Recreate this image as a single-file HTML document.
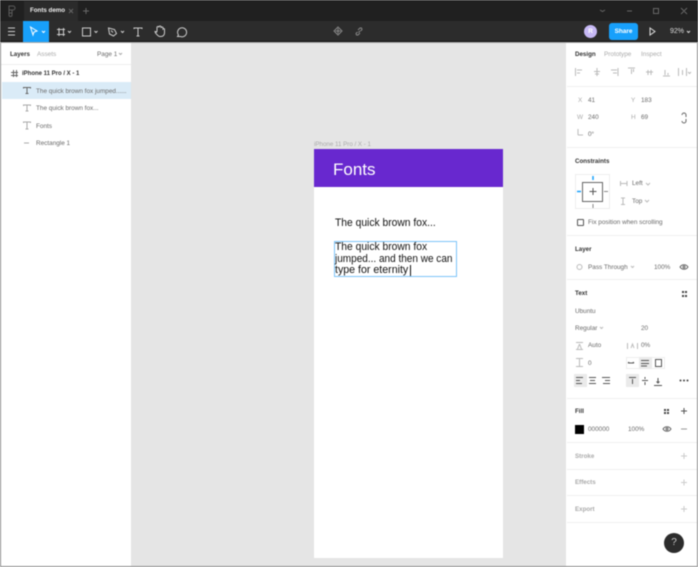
<!DOCTYPE html>
<html><head><meta charset="utf-8"><style>
html,body{margin:0;padding:0;width:698px;height:567px;overflow:hidden;background:#fff}
body{position:relative;font-family:"Liberation Sans",sans-serif;filter:blur(.4px)}
.b{position:absolute}
.t{position:absolute;font-size:6.4px;line-height:8px;white-space:nowrap;color:#6a6a6a}
.h{color:#333;font-weight:bold;font-size:6.2px}
.g{color:#aaa}
svg{position:absolute;left:0;top:0}
.u{position:absolute;font-family:"Liberation Sans",sans-serif;color:#111;white-space:nowrap;transform-origin:0 0}
</style></head><body>
<div class="b" style="left:0;top:0;width:698px;height:21px;background:#202020"></div>
<div class="b" style="left:24px;top:1px;width:54px;height:20px;background:#2b2b2b"></div>
<div class="b" style="left:0;top:21px;width:698px;height:20px;background:#2c2c2c"></div>
<div class="b" style="left:0;top:41px;width:698px;height:1px;background:#111"></div>
<div class="b" style="left:23px;top:21px;width:26px;height:21px;background:#18a0fb"></div>
<div class="b" style="left:1px;top:43px;width:130px;height:524px;background:#fff"></div>
<div class="b" style="left:0;top:42px;width:698px;height:1px;background:#aaa"></div>
<div class="b" style="left:131px;top:43px;width:435px;height:524px;background:#e5e5e5"></div>
<div class="b" style="left:566px;top:43px;width:131px;height:524px;background:#fff"></div>
<div class="b" style="left:0;top:43px;width:1px;height:524px;background:#888"></div>
<div class="b" style="left:697px;top:43px;width:1px;height:524px;background:#888"></div>
<div class="b" style="left:0;top:566px;width:698px;height:1px;background:#888"></div>
<div class="b" style="left:1px;top:64px;width:130px;height:1px;background:#eee"></div>
<div class="b" style="left:2px;top:82px;width:129px;height:17px;background:#daebf7"></div>

<div class="t" style="left:30px;top:7px;color:#eee;font-weight:bold;font-size:6.2px">Fonts demo</div>
<div class="t h" style="left:10px;top:51px">Layers</div>
<div class="t g" style="left:37px;top:51px">Assets</div>
<div class="t" style="left:97px;top:51px">Page 1</div>
<div class="t h" style="left:22px;top:70px;font-size:6px">iPhone 11 Pro / X - 1</div>
<div class="t" style="left:36px;top:88px;font-size:6.4px">The quick brown fox jumped......</div>
<div class="t" style="left:36px;top:105px">The quick brown fox...</div>
<div class="t" style="left:36px;top:123px">Fonts</div>
<div class="t" style="left:36px;top:140px">Rectangle 1</div>

<div class="b" style="left:609px;top:23px;width:29px;height:17px;background:#18a0fb;border-radius:3px"></div>
<div class="t" style="left:609px;top:28px;width:29px;text-align:center;color:#fff;font-weight:bold">Share</div>
<div class="b" style="left:584px;top:25px;width:13px;height:13px;border-radius:50%;background:#c7b9f5"></div>
<div class="t" style="left:584px;top:28px;width:13px;text-align:center;color:#fff;font-weight:bold">R</div>
<div class="t" style="left:670px;top:28px;color:#ddd;font-size:7px">92%</div>

<div class="t g" style="left:314px;top:141px;font-size:6.2px">iPhone 11 Pro / X - 1</div>
<div class="b" style="left:314px;top:149px;width:189px;height:409px;background:#fff"></div>
<div class="b" style="left:314px;top:149px;width:189px;height:38px;background:#6828cf"></div>
<div class="u" style="left:333px;top:160px;font-size:17px;line-height:20px;color:#fff">Fonts</div>
<div class="u" style="left:335px;top:217px;font-size:11.2px;line-height:13px;transform:scaleX(.92)">The quick brown fox...</div>
<div class="b" style="left:334px;top:241px;width:121px;height:34px;border:1px solid #7cc4f8"></div>
<div class="u" style="left:335px;top:241px;font-size:11.2px;line-height:13px;transform:scaleX(.92)">The quick brown fox</div>
<div class="u" style="left:335px;top:253px;font-size:11.2px;line-height:13px;transform:scaleX(.895)">jumped... and then we can</div>
<div class="u" style="left:335px;top:264px;font-size:11.2px;line-height:13px;transform:scaleX(.95)">type for eternity</div>
<div class="b" style="left:410px;top:265px;width:1px;height:11px;background:#111"></div>

<div class="t h" style="left:575px;top:51px">Design</div>
<div class="t g" style="left:604px;top:51px">Prototype</div>
<div class="t g" style="left:641px;top:51px">Inspect</div>
<div class="t g" style="left:578px;top:97px">X</div><div class="t" style="left:588px;top:97px">41</div>
<div class="t g" style="left:631px;top:97px">Y</div><div class="t" style="left:641px;top:97px">183</div>
<div class="t g" style="left:577px;top:114px">W</div><div class="t" style="left:588px;top:114px">240</div>
<div class="t g" style="left:631px;top:114px">H</div><div class="t" style="left:641px;top:114px">69</div>
<div class="t" style="left:588px;top:131px">0°</div>
<div class="t h" style="left:575px;top:158px">Constraints</div>
<div class="t" style="left:632px;top:180px">Left</div>
<div class="t" style="left:632px;top:198px">Top</div>
<div class="t" style="left:588px;top:219px">Fix position when scrolling</div>
<div class="t h" style="left:575px;top:246px">Layer</div>
<div class="t" style="left:588px;top:264px">Pass Through</div>
<div class="t" style="left:654px;top:264px">100%</div>
<div class="t h" style="left:575px;top:290px">Text</div>
<div class="t" style="left:575px;top:308px">Ubuntu</div>
<div class="t" style="left:575px;top:325px">Regular</div>
<div class="t" style="left:641px;top:325px">20</div>
<div class="t" style="left:588px;top:342px">Auto</div>
<div class="t" style="left:641px;top:342px">0%</div>
<div class="t" style="left:588px;top:360px">0</div>
<div class="t h" style="left:575px;top:408px">Fill</div>
<div class="t" style="left:588px;top:426px">000000</div>
<div class="t" style="left:628px;top:426px">100%</div>
<div class="t g" style="left:575px;top:453px;font-weight:bold;font-size:6.2px">Stroke</div>
<div class="t g" style="left:575px;top:479px;font-weight:bold;font-size:6.2px">Effects</div>
<div class="t g" style="left:575px;top:506px;font-weight:bold;font-size:6.2px">Export</div>
<div class="b" style="left:664px;top:533px;width:20px;height:20px;border-radius:50%;background:#2c2c2c"></div>
<div class="t" style="left:664px;top:537px;width:20px;text-align:center;color:#ccc;font-size:10px;line-height:12px">?</div>
<div class="b" style="left:575px;top:425px;width:9px;height:9px;background:#000"></div>
<div class="b" style="left:575px;top:174px;width:35px;height:35px;border:1px solid #eee;box-sizing:border-box"></div>
<div class="b" style="left:582px;top:182px;width:21px;height:20px;border:1px solid #666;box-sizing:border-box"></div>
<div class="b" style="left:574px;top:374px;width:13px;height:13px;background:#eaeaea"></div>
<div class="b" style="left:626px;top:374px;width:13px;height:13px;background:#eaeaea"></div>
<div class="b" style="left:626px;top:357px;width:39px;height:12px;border:1px solid #eee;box-sizing:border-box"></div>
<div class="b" style="left:639px;top:357px;width:13px;height:12px;background:#eaeaea"></div>
<div class="b" style="left:577px;top:219px;width:7px;height:7px;border:1px solid #555;border-radius:1px;box-sizing:border-box"></div>

<svg width="698" height="567" fill="none" stroke-width="1">
<g stroke="#5a5a5a"><path d="M9 6h4a2 2 0 0 1 0 4h-4zM9 10h3v3h-3z"/><path d="M9 13h3v2a1.500 1.500 0 0 1-3 0z"/></g>
<path d="M86 8v6M83 11h6M69 9l4 4M73 9l-4 4" stroke="#666"/>
<path d="M8 28h7M8 31.500h7M8 35h7" stroke="#ccc"/>
<path d="M30.500 27l6.500 4-3 1-1 3z" stroke="#fff"/><path d="M42 31l1.500 1.500 1.500-1.500" stroke="#fff"/>
<g stroke="#ccc"><path d="M57 29.500h8M57 34.500h8M59 28v8M63.500 28v8"/><path d="M68 31l1.500 1.500 1.500-1.500M94.500 31l1.500 1.500 1.500-1.500M121 31l1.500 1.500 1.500-1.500"/>
<rect x="82.500" y="28" width="8" height="8"/><path d="M108.500 28l6 1.500 2 4-3 2.500-4-2zM111 30.500l2 2"/>
<path d="M134 29v-1h8v1M138 28v8M136.500 36h3"/>
<path d="M157 31v-3.500a1 1 0 0 1 2 0v-.5a1 1 0 0 1 2 0v1a1 1 0 0 1 2 0v1a1 1 0 0 1 1.500 0v4c0 2-1.500 3.500-3.500 3.500h-1c-2 0-3-2-4.500-3.500l-.5-1.500c1 0 1.500.5 1.500 1z"/>
<path d="M177.500 36.500l1-1.500a4.500 4.500 0 1 1 2 1.500z"/></g>
<g stroke="#888"><path d="M338 27l4 4-4 4-4-4zM335.500 31h5M338 28.500v5"/><path d="M358 30l2-2h1.500l.5 1.500-1.500 1.500M360 33l-2 2h-1.500l-.5-1.500 1.500-1.500M358.500 32.500l1.500-1.500"/></g>
<path d="M600 10l2.500 1.500 2.500-1.500M627 11h5M653.500 8.500h5v5h-5zM681 8l6 6M687 8l-6 6" stroke="#666"/>
<path d="M650 28l5 3.500-5 3.500z" stroke="#ddd"/><path d="M687 31l1.500 1.500 1.500-1.500" stroke="#ddd"/>
<g stroke="#666"><path d="M13.500 70v7M16.500 70v7M11 72.500h7M11 75.500h7"/><path d="M23.500 88.500v-1h7v1M27 87.500v6M25.500 93.500h3"/></g>
<g stroke="#aaa"><path d="M23.500 106v-1h7v1M27 105v6M25.500 111h3M23.500 123v-1h7v1M27 122v7M25.500 129h3"/><path d="M24 143h5"/></g>
<path d="M119 53l1.500 1.500 1.500-1.500" stroke="#aaa"/>
<g stroke="#bbb"><path d="M575.500 68v8M577 70h5M577 73h3M594 71.500h6M597 68v8M595 74h4M611 70h6M613 73h4M618 68v8M628 68h7M631.500 69v5M633.500 69v3M646 72h7M648 70v5M651 70v5M663 76h7M665 70v5M668 73v2M678.500 68v8M686.500 68v8M682.500 70v5M688 72l1.500 1.500 1.500-1.500"/><path d="M578 135v-6M578 135h5"/></g>
<path d="M682 115a2 2 0 0 1 4 0v2M682 121a2 2 0 0 0 4 0v-2" stroke="#666"/>
<path d="M593 195v-7M589.500 191.500h7" stroke="#555"/>
<path d="M593 176v4M593 204v4M577 191.500h4M604 191.500h4" stroke="#888"/>
<path d="M593 176v4M577 191.500h4" stroke="#18a0fb" stroke-width="1.500"/>
<g stroke="#bbb"><path d="M620.500 181v5M627 181v5M620 183.500h7M621 198h4M621 204.500h4M623 198v6.500"/><path d="M646 183l2 2 2-2M645 200l2 2 2-2M631 266l1.500 1.500 1.500-1.500M600 327l1.500 1.500 1.500-1.500"/><circle cx="579.500" cy="267" r="2.500"/><path d="M576 342.500h7M576 349.500h7M579.500 344l-2 5M579.500 344l2 5M627.500 343v6M637.500 343v6M631 348l1.500-4 1.500 4M576 358.500h7M576 366.500h7M579.500 359v7"/></g>
<g stroke="#666"><path d="M680 267c2-3 6-3 8 0-2 3-6 3-8 0zM663 429c2-3 6-3 8 0-2 3-6 3-8 0z"/><circle cx="684" cy="267" r="1"/><circle cx="667" cy="429" r="1"/></g>
<g stroke="#555"><path d="M576 377.500h7M576 380.500h4M576 383.500h6M589 377.500h7M590 380.500h5M589 383.500h7M602 377.500h8M605 380.500h5M603 383.500h7M629 377.500h7M632.500 379v5M642 380.500h6M645 377v2M645 382v3M654 385.500h8M658 378v5M656.500 381.500l1.500 1.500 1.500-1.500"/>
<path d="M628 363h6M628 363l1-1M634 363l-1-1M641 360.500h8M641 363.500h8M641 366h6"/><rect x="655.500" y="359.500" width="6" height="7"/>
<path d="M681 411h6M684 408v6"/></g>
<g fill="#444" stroke="none"><rect x="682" y="291" width="2" height="2"/><rect x="685" y="291" width="2" height="2"/><rect x="682" y="295" width="2" height="2"/><rect x="685" y="295" width="2" height="2"/><rect x="664" y="409" width="2" height="2"/><rect x="667" y="409" width="2" height="2"/><rect x="664" y="412" width="2" height="2"/><rect x="667" y="412" width="2" height="2"/><circle cx="680.500" cy="380.500" r="1"/><circle cx="684" cy="380.500" r="1"/><circle cx="687.500" cy="380.500" r="1"/></g>
<g stroke="#ccc"><path d="M681 456h6M684 453v6M681 482.500h6M684 479.500v6M681 509h6M684 506v6"/></g>
<path d="M681 429h6" stroke="#999"/>
<g stroke="#f0f0f0"><path d="M567 86.500h130M567 147.500h130M567 235.500h130M567 279.500h130M567 398.500h130M567 442.500h130M567 469.500h130M567 495.500h130M567 522.500h130"/></g>
</svg>
</body></html>
